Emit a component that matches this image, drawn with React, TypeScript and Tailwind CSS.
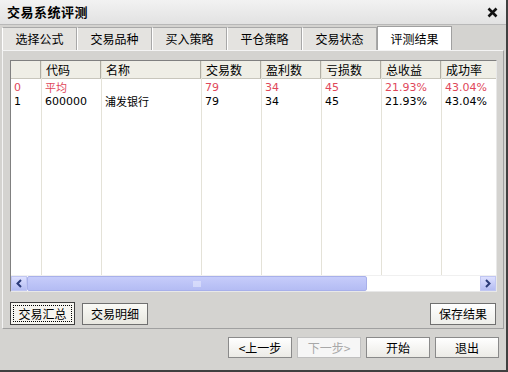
import React from 'react';

const font = { fontFamily: "'Noto Sans CJK SC', 'Liberation Sans', sans-serif" };

const tabs = ['选择公式', '交易品种', '买入策略', '平仓策略', '交易状态', '评测结果'];

const columns = [
  { title: '', w: 'w-[31px]' },
  { title: '代码', w: 'w-[60px]' },
  { title: '名称', w: 'w-[100px]' },
  { title: '交易数', w: 'w-[60px]' },
  { title: '盈利数', w: 'w-[60px]' },
  { title: '亏损数', w: 'w-[60px]' },
  { title: '总收益', w: 'w-[60px]' },
  { title: '成功率', w: 'w-[56px]' },
];

const rows = [
  { red: true, cells: ['0', '平均', '', '79', '34', '45', '21.93%', '43.04%'] },
  { red: false, cells: ['1', '600000', '浦发银行', '79', '34', '45', '21.93%', '43.04%'] },
];

function Btn({ label, disabled }: { label: string; disabled?: boolean }) {
  return (
    <button
      className={`w-[64px] h-[21px] text-[12px] leading-none flex items-center justify-center border ${
        disabled
          ? 'text-[#a8a8a8] bg-[#f6f6f6] border-[#c0c0c0]'
          : 'text-black border-[#8a8a8a] bg-gradient-to-b from-[#ffffff] to-[#ecebe6]'
      }`}
      style={font}
    >
      {label}
    </button>
  );
}

export default function App() {
  return (
    <div className="w-[508px] h-[372px] bg-[#d4d3d0] flex flex-col border-r-2 border-b-2 border-[#404040] overflow-hidden" style={font}>
      <div className="h-[25px] flex items-center justify-between pl-[7px] pr-[8px] bg-gradient-to-b from-[#f2f2f2] to-[#e2e2e2] border-b border-[#b8b8b8]">
        <span className="text-[13px] font-bold text-black tracking-[0.5px]">交易系统评测</span>
        <svg width="11" height="11" viewBox="0 0 11 11" className="mt-[1px]">
          <path d="M1.5 1.5 L9.5 9.5 M9.5 1.5 L1.5 9.5" stroke="#111" strokeWidth="2.6" />
        </svg>
      </div>

      <div className="flex pl-[2px] mt-[2px] h-[23px] items-end">
        {tabs.map((t, i) => (
          <div
            key={t}
            className={`h-[23px] w-[75px] flex items-center justify-center text-[12px] border-t border-l border-r ${
              i === 5
                ? 'bg-white border-[#a0a0a0] h-[24px] relative z-10'
                : 'bg-[#e4e3e0] border-[#a8a8a8] border-l-[#ffffff]'
            } ${i > 0 && i < 5 ? 'border-l-[#a0a0a0]' : ''}`}
          >
            {t}
          </div>
        ))}
      </div>

      <div className="ml-[2px] mr-[2px] h-[279px] border border-[#f4f4f4] border-r-[#a0a0a0] border-b-[#a0a0a0] flex flex-col px-[7px] pt-[9px]">
        <div className="w-[487px] h-[232px] bg-white border border-[#808080] border-r-[#e8e8e8] border-b-[#e8e8e8] flex flex-col overflow-hidden">
          <div className="flex flex-1 overflow-hidden">
            {columns.map((c, ci) => (
              <div key={ci} className={`${c.w} shrink-0 flex flex-col border-r border-[#e4e2d8]`}>
                <div className="h-[18px] bg-[#efeee6] border-b border-[#c8c6bc] border-r border-r-[#b0aea4] text-[12px] leading-[18px] pl-[4px] text-black">
                  {c.title}
                </div>
                <div className="pt-[1px]">
                  {rows.map((r, ri) => (
                    <div
                      key={ri}
                      className={`h-[14px] text-[11px] leading-[15px] pl-[3px] ${r.red ? 'text-[#e0475a]' : 'text-black'} whitespace-nowrap`}
                      style={{ fontFamily: (ci === 1 && ri === 0) || ci === 2 ? "'Noto Sans CJK SC', sans-serif" : "Tahoma, 'DejaVu Sans', 'Liberation Sans', sans-serif" }}
                    >
                      {r.cells[ci]}
                    </div>
                  ))}
                </div>
              </div>
            ))}
          </div>
          <div className="h-[16px] flex items-stretch bg-white border-t border-[#f0f0f0]">
            <div className="w-[16px] bg-gradient-to-b from-[#dde0ff] to-[#b4bcf2] border border-[#c0c6f2] flex items-center justify-center">
              <svg width="8" height="9" viewBox="0 0 8 9">
                <path d="M6 1 L2.5 4.5 L6 8" stroke="#2a3a78" strokeWidth="2" fill="none" />
              </svg>
            </div>
            <div className="w-[340px] bg-gradient-to-b from-[#c6ccfa] to-[#b4bcf4] border border-[#a8b0ea] rounded-[2px] flex items-center justify-center">
              <svg width="8" height="8" viewBox="0 0 8 8">
                <path d="M1 1v6M3 1v6M5 1v6M7 1v6" stroke="#eef0ff" strokeWidth="1" />
              </svg>
            </div>
            <div className="flex-1" />
            <div className="w-[16px] bg-gradient-to-b from-[#dde0ff] to-[#b4bcf2] border border-[#c0c6f2] flex items-center justify-center">
              <svg width="8" height="9" viewBox="0 0 8 9">
                <path d="M2 1 L5.5 4.5 L2 8" stroke="#2a3a78" strokeWidth="2" fill="none" />
              </svg>
            </div>
          </div>
        </div>

        <div className="flex items-center mt-[10px] h-[23px]">
          <div className="w-[65px] h-[23px] flex items-center justify-center border border-[#404040] bg-[#f6f5f0] text-[12px]">
            <span className="w-[59px] h-[17px] flex items-center justify-center border border-dotted border-black">交易汇总</span>
          </div>
          <div className="ml-[7px]">
            <div className="w-[66px] h-[22px] flex items-center justify-center border border-[#707070] bg-gradient-to-b from-[#fafaf6] to-[#e8e7e0] text-[12px]">
              交易明细
            </div>
          </div>
          <div className="flex-1" />
          <div className="w-[66px] h-[22px] flex items-center justify-center border border-[#707070] bg-gradient-to-b from-[#ffffff] to-[#eeeeea] text-[12px]">
            保存结果
          </div>
        </div>
      </div>

      <div className="flex justify-end gap-[5px] pr-[7px] mt-[8px]">
        <Btn label="<上一步" />
        <Btn label="下一步>" disabled />
        <Btn label="开始" />
        <Btn label="退出" />
      </div>
    </div>
  );
}
